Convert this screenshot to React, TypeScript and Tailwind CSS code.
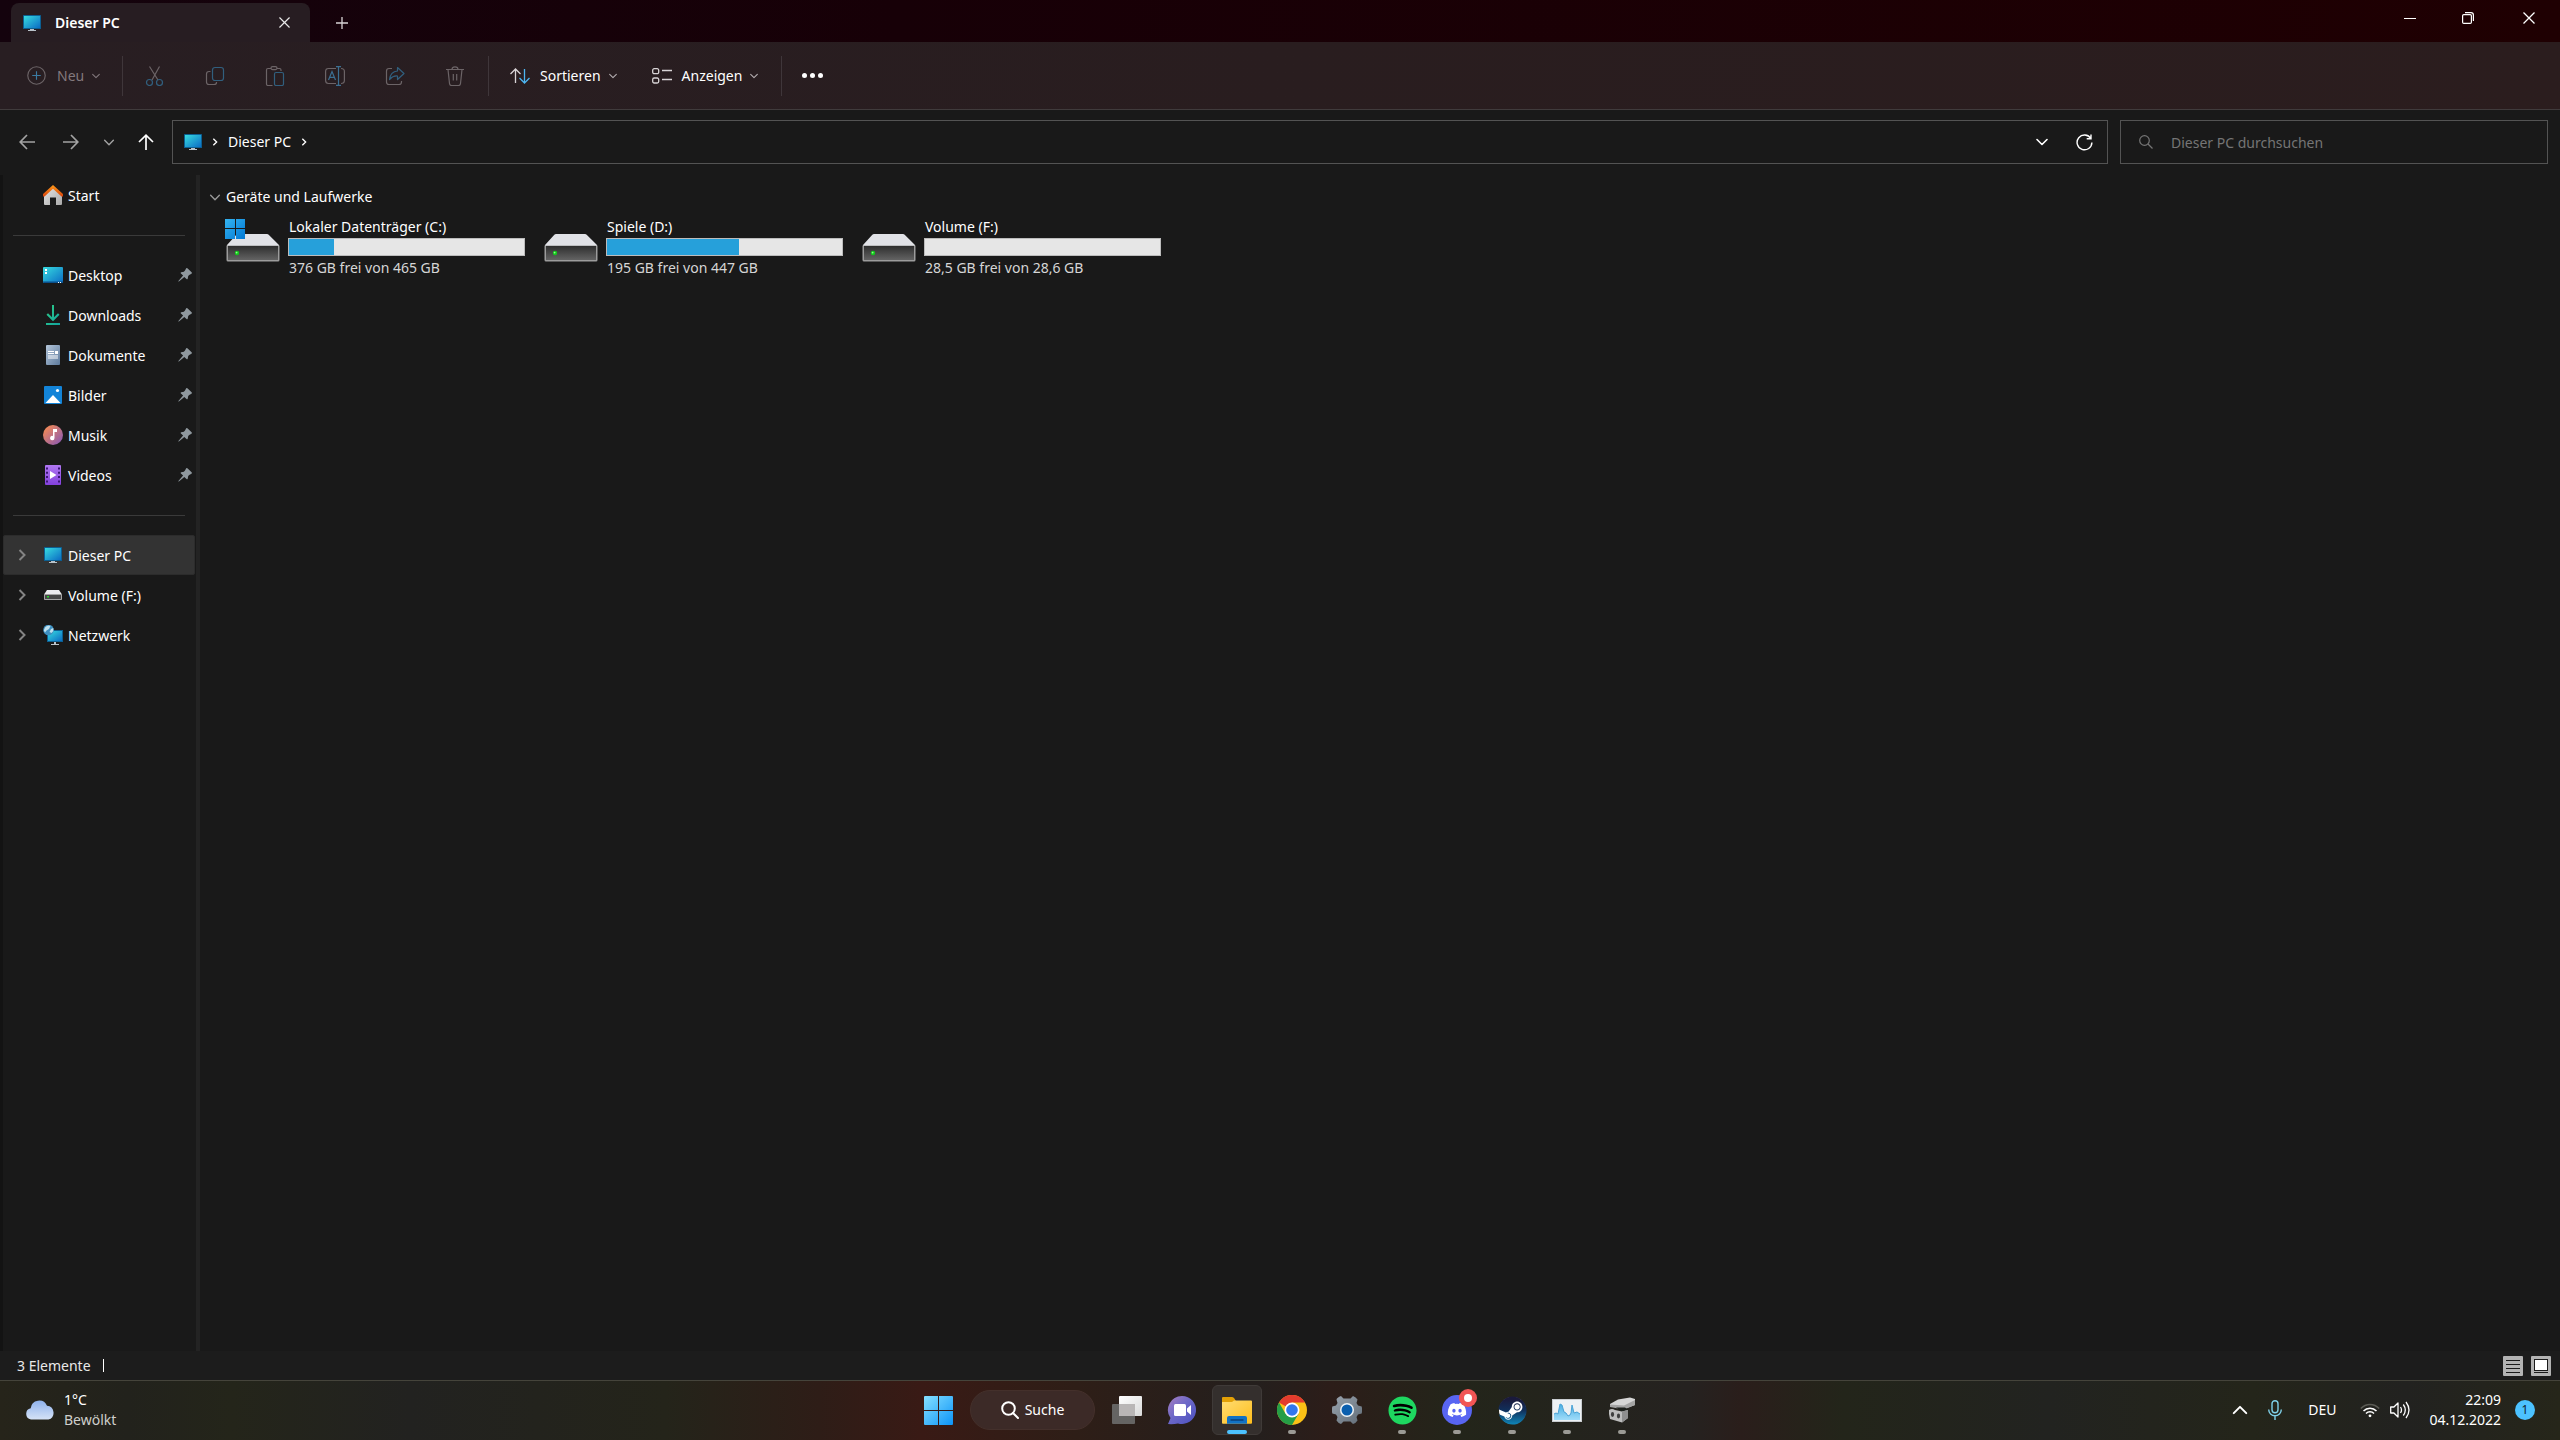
import type { ReactNode } from "react";
import { FaDiscord, FaSpotify, FaSteam } from "react-icons/fa";

type IconProps = { className?: string };

type Place = { label: string; icon: ReactNode };

type Drive = { name: string; free: string; used: number; system?: boolean };

/* ---------- icons ---------- */

function ChevronDown({ className = "" }: IconProps) {
  return (
    <svg viewBox="0 0 12 8" fill="none" stroke="currentColor" strokeLinecap="round" strokeLinejoin="round" className={className}>
      <path d="M1 1.5 6 6.5 11 1.5" strokeWidth="1.6" />
    </svg>
  );
}

function ChevronRight({ className = "" }: IconProps) {
  return (
    <svg viewBox="0 0 8 12" fill="none" stroke="currentColor" className={className}>
      <path d="M1.5 1 6.5 6 1.5 11" strokeWidth="2" />
    </svg>
  );
}

function CloseIcon({ className = "" }: IconProps) {
  return (
    <svg viewBox="0 0 12 12" fill="none" stroke="currentColor" strokeWidth="1.3" className={className}>
      <path d="M.5.5l11 11M11.5.5l-11 11" />
    </svg>
  );
}

function MonitorIcon({ className = "" }: IconProps) {
  return (
    <svg viewBox="0 0 18 16" className={className}>
      <defs>
        <linearGradient id="screen" x1="0" y1="0" x2="1" y2="1">
          <stop offset="0" stopColor="#37dbe0" />
          <stop offset="1" stopColor="#0b6cc4" />
        </linearGradient>
      </defs>
      <rect width="18" height="14" rx=".6" fill="#0c5f92" />
      <rect x="1" y="1" width="16" height="12" fill="url(#screen)" />
      <path d="M7 14h4v1h2v1H5v-1h2z" fill="#b9c2c9" />
    </svg>
  );
}

function HomeIcon() {
  return (
    <svg viewBox="0 0 20 20" className="size-5">
      <defs>
        <linearGradient id="wall" x1="0" y1="0" x2="1" y2="1">
          <stop offset="0" stopColor="#e6e6e6" />
          <stop offset="1" stopColor="#a9a9a9" />
        </linearGradient>
        <linearGradient id="roof" x1="0" y1="0" x2="0" y2="1">
          <stop offset="0" stopColor="#ff9a1a" />
          <stop offset="1" stopColor="#d8430b" />
        </linearGradient>
      </defs>
      <path d="M1 9.5 10 2l9 7.5V19q0 1-1 1h-5v-7.5H7V20H2q-1 0-1-1z" fill="url(#wall)" />
      <path d="M10 0 20 9v2.5h-1.5L10 3.8 1.5 11.5H0V9z" fill="url(#roof)" />
    </svg>
  );
}

function DesktopIcon() {
  return (
    <svg viewBox="0 0 20 16" className="h-4 w-5">
      <rect width="20" height="16" rx="1" fill="url(#screen)" />
      <path d="M0 14.5h20V15q0 1-1 1H1q-1 0-1-1z" fill="#0a4f8a" />
      <path d="M2 2h2v2H2zM2 5h2v2H2zM15 15h1v1h-1zM17 15h1v1h-1z" fill="#fff" />
    </svg>
  );
}

function DownloadIcon() {
  return (
    <svg viewBox="0 0 14 20" className="h-5 w-[14px]">
      <defs>
        <linearGradient id="down" x1="0" y1="0" x2="1" y2="1">
          <stop offset="0" stopColor="#2fce85" />
          <stop offset="1" stopColor="#12a3a0" />
        </linearGradient>
      </defs>
      <path d="M6 0h2v12.200l4-4 1.500 1.500L7 16.200.5 9.700 2 8.200l4 4zM0 18h14v2H0z" fill="url(#down)" />
    </svg>
  );
}

function DocumentIcon() {
  return (
    <svg viewBox="0 0 14 20" className="h-5 w-[14px]">
      <defs>
        <linearGradient id="doc" x1="0" y1="0" x2="1" y2="1">
          <stop offset="0" stopColor="#b4c6da" />
          <stop offset="1" stopColor="#5d7a9c" />
        </linearGradient>
      </defs>
      <rect width="14" height="20" rx="1" fill="url(#doc)" />
      <path d="M2 6h6v1H2zM2 8h6v1H2zM9 6h3v3H9zM2 10.5h10v1H2zM2 12.5h10v1H2z" fill="#fff" />
    </svg>
  );
}

function PictureIcon() {
  return (
    <svg viewBox="0 0 18 18" className="size-[18px]">
      <rect width="18" height="18" rx="1" fill="#1384d8" />
      <path d="M1.500 17 9 9l7.500 8z" fill="#fff" />
      <circle cx="13.5" cy="4.5" r="1.6" fill="#fff" />
    </svg>
  );
}

function MusicIcon() {
  return (
    <svg viewBox="0 0 20 20" className="size-5">
      <defs>
        <linearGradient id="music" x1="0" y1="0" x2="1" y2="1">
          <stop offset="0.1" stopColor="#f48a54" />
          <stop offset="0.9" stopColor="#8e5bb0" />
        </linearGradient>
      </defs>
      <circle cx="10" cy="10" r="10" fill="url(#music)" />
      <path d="M10 4h4v3h-2.5v6a2.200 2.200 0 1 1-1.500-2.100z" fill="#fff" />
    </svg>
  );
}

function VideoIcon() {
  return (
    <svg viewBox="0 0 16 20" className="h-5 w-4">
      <defs>
        <linearGradient id="video" x1="0" y1="0" x2="0" y2="1">
          <stop offset="0" stopColor="#b178f2" />
          <stop offset="1" stopColor="#8340dc" />
        </linearGradient>
      </defs>
      <rect width="16" height="20" rx="1" fill="url(#video)" />
      <path d="M5 6v8l6.500-4z" fill="#fff" />
      <path d="M2 2.500v16M14 2.500v16" stroke="#3b1774" strokeWidth="2" strokeDasharray="2 2.3" />
    </svg>
  );
}

function PinIcon() {
  return (
    <svg viewBox="0 0 14 14" className="size-[14px] text-[#8f989e]">
      <path
        d="M8.200.3q.8-.5 1.500.1l3.900 3.900q.6.800-.1 1.400l-2.300 1.200-1 1.100-.5 2.700q-.4.900-1.200.3L6.300 8.900.9 13.500H.4v-.5L5.100 7.600 2.900 5.500q-.6-.8.300-1.200l2.700-.5 1.100-1.200z"
        fill="currentColor"
      />
    </svg>
  );
}

function SmallDriveIcon() {
  return (
    <svg viewBox="0 0 18 10" className="h-[10px] w-[18px]">
      <path d="M3 0h12l3 4.500H0z" fill="#ededf0" />
      <rect y="4" width="18" height="6" rx=".8" fill="#a5a5a5" />
      <rect x="1" y="5" width="16" height="4" fill="#484848" />
      <rect x="3" y="6" width="2" height="1.5" fill="#25d32c" />
    </svg>
  );
}

function NetworkIcon() {
  return (
    <svg viewBox="0 0 20 20" className="size-5">
      <rect x="4" y="5" width="16" height="12" fill="#0c5f92" />
      <rect x="5" y="6" width="14" height="10" fill="url(#screen)" />
      <path d="M11 17h2v2h3v1H8v-1h3z" fill="#b9c2c9" />
      <circle cx="5.5" cy="5" r="5.3" fill="#3d8fc0" />
      <path d="M2 2.500Q5-.5 7.500 1L6 4 3.500 5.500 2 7.500.8 5.500zM8 4l2.300-1v3L8.500 8 6.500 7z" fill="#bfe0ee" />
    </svg>
  );
}

function DriveIcon({ system }: { system?: boolean }) {
  return (
    <svg viewBox="0 0 56 44" className="h-11 w-14 shrink-0">
      <defs>
        <linearGradient id="drive" x1="0" y1="0" x2="0" y2="1">
          <stop offset="0" stopColor="#2e2e2e" />
          <stop offset="1" stopColor="#636363" />
        </linearGradient>
        <linearGradient id="win" x1="0" y1="0" x2="1" y2="1">
          <stop offset="0" stopColor="#35b4f0" />
          <stop offset="1" stopColor="#0078d4" />
        </linearGradient>
      </defs>
      <path d="M13 16h29q1 0 1.700.8L54 27v1H2v-1L11.300 16.800Q12 16 13 16z" fill="#e1e2e7" />
      <path d="M1.500 27.500h53V42q0 1.500-1.500 1.500H3q-1.500 0-1.500-1.500z" fill="#9c9c9c" />
      <rect x="3" y="28" width="50" height="14" fill="url(#drive)" />
      <circle cx="12" cy="35" r="2.2" fill="#14c81c" />
      <circle cx="11.6" cy="34.6" r=".9" fill="#8dff8a" />
      {system && <path d="M0 1h10v9H0zM11 1h9v9h-9zM0 11h10v10H0zM11 11h9v10h-9z" fill="url(#win)" />}
    </svg>
  );
}

function CutIcon() {
  return (
    <svg viewBox="0 0 20 20" fill="none" strokeWidth="1.2" className="size-5">
      <path d="M4.500.5 13 14M14.500.5 7 14" stroke="#6c6467" />
      <circle cx="4.5" cy="16.5" r="3" stroke="#315f7e" />
      <circle cx="14.5" cy="16.5" r="3" stroke="#315f7e" />
    </svg>
  );
}

function CopyIcon() {
  return (
    <svg viewBox="0 0 20 20" fill="none" strokeWidth="1.2" className="size-5">
      <path d="M5.500 5.500H4Q1.500 5.500 1.500 8v8q0 2.500 2.500 2.500h5q2.500 0 2.500-2v-.5" stroke="#6c6467" />
      <rect x="7.5" y="1.5" width="11" height="13" rx="2.5" stroke="#315f7e" />
    </svg>
  );
}

function PasteIcon() {
  return (
    <svg viewBox="0 0 20 20" fill="none" strokeWidth="1.2" className="size-5">
      <path d="M6 2.500H3Q1.500 2.500 1.500 4v14q0 1.500 1.500 1.500h4.500M12 2.500h2.500Q16 2.500 16 4v1" stroke="#6c6467" />
      <rect x="6" y=".6" width="6" height="3" rx="1.5" stroke="#6c6467" />
      <rect x="9.5" y="6.5" width="9" height="13" rx="1.5" stroke="#315f7e" />
    </svg>
  );
}

function RenameIcon() {
  return (
    <svg viewBox="0 0 20 20" fill="none" strokeWidth="1.2" className="size-5">
      <path d="M11 2.500H3.500Q.6 2.500.6 5.500v9q0 3 2.900 3H11M16 2.500q3.400 0 3.400 3v9q0 3-3.400 3" stroke="#6c6467" />
      <path d="M3.500 14 7 5.500 10.500 14M4.700 11.300h4.600M13.500.6v18.800M11 .6h5M11 19.400h5" stroke="#3b6f92" />
    </svg>
  );
}

function ShareIcon() {
  return (
    <svg viewBox="0 0 20 20" fill="none" strokeWidth="1.2" strokeLinejoin="round" className="size-5">
      <path d="M7 2.500H4Q1.500 2.500 1.500 5v11q0 2.500 2.500 2.500h10q2.500 0 2.500-2.500v-1" stroke="#6c6467" />
      <path d="M12.500 1.500 19 7.500l-6.500 6V10Q8 9.500 4.500 13.500 5.500 5.500 12.500 5z" stroke="#315f7e" />
    </svg>
  );
}

function TrashIcon() {
  return (
    <svg viewBox="0 0 20 20" fill="none" stroke="#6c6467" strokeWidth="1.2" className="size-5">
      <path d="M1 3.500h18M7 3.300Q7 .8 10 .8t3 2.500M3 3.500l1.500 14q.2 2 2 2h7q1.800 0 2-2L17 3.500M8.300 8v6.500M11.700 8v6.500" />
    </svg>
  );
}

function WindowsLogo() {
  return (
    <svg viewBox="0 0 29 29" className="size-[29px]">
      <defs>
        <linearGradient id="start" x1="0" y1="0" x2="1" y2="1">
          <stop offset="0" stopColor="#86e0ff" />
          <stop offset="1" stopColor="#0c94f8" />
        </linearGradient>
      </defs>
      <path d="M1 0h13v14H0V1q0-1 1-1zM15 0h13q1 0 1 1v13H15zM0 15h14v14H1q-1 0-1-1zM15 15h14v13q0 1-1 1H15z" fill="url(#start)" />
    </svg>
  );
}

function TaskViewIcon() {
  return (
    <svg viewBox="0 0 30 28" className="h-7 w-[30px]">
      <defs>
        <linearGradient id="tvBack" x1="0" y1="0" x2="1" y2="1">
          <stop offset="0" stopColor="#ffffff" />
          <stop offset="1" stopColor="#d9d9d9" />
        </linearGradient>
      </defs>
      <rect x="7" width="23" height="20" rx="1" fill="url(#tvBack)" />
      <rect y="8" width="23" height="20" rx="1" fill="#6b6b6b" fillOpacity=".9" />
      <rect x="7" y="8" width="16" height="12" fill="#b9b6b6" />
    </svg>
  );
}

function ChatIcon() {
  return (
    <svg viewBox="0 0 30 30" className="size-[30px]">
      <defs>
        <linearGradient id="chat" x1="0" y1="0" x2="1" y2="1">
          <stop offset="0" stopColor="#a77fc0" />
          <stop offset=".45" stopColor="#6d68c8" />
          <stop offset="1" stopColor="#4a50c0" />
        </linearGradient>
      </defs>
      <path d="M15 1a14 14 0 1 1-4 27.400Q6 29.500 1 29L3.500 23A14 14 0 0 1 15 1z" fill="url(#chat)" />
      <rect x="7" y="9" width="12" height="12" rx="1.5" fill="#fff" />
      <path d="M20 13.500 24 10v10l-4-3.500z" fill="#fff" />
    </svg>
  );
}

function FolderIcon() {
  return (
    <svg viewBox="0 0 30 27" className="h-[27px] w-[30px]">
      <defs>
        <linearGradient id="folder" x1="0" y1="0" x2="1" y2="1">
          <stop offset="0" stopColor="#ffdc72" />
          <stop offset="1" stopColor="#ffbe1c" />
        </linearGradient>
      </defs>
      <path d="M0 1q0-1 1-1h9q1 0 2 1l2 3v3H0z" fill="#e2a006" />
      <path d="M0 5h10l2-1.500h17q1 0 1 1V26q0 .8-1 .8H1q-1 0-1-.8z" fill="url(#folder)" />
      <path d="M5 26.800V21q0-2 2-2h16q2 0 2 2v5.800z" fill="#1272c4" />
      <path d="M9 23h12" stroke="#0a3f78" strokeWidth="1.4" strokeLinecap="round" />
    </svg>
  );
}

function ChromeIcon() {
  return (
    <svg viewBox="0 0 30 30" className="size-[30px]">
      <circle cx="15" cy="15" r="15" fill="#fbc116" />
      <path d="M2 7.500A15 15 0 0 1 28 7.500H15V15z" fill="#e33b2e" />
      <path d="M2 7.500 8.500 18.700 15 15 21.500 18.700 15 30A15 15 0 0 1 2 7.500z" fill="#259e46" />
      <circle cx="15" cy="15" r="7.5" fill="#fff" />
      <circle cx="15" cy="15" r="5.8" fill="#3277ec" />
    </svg>
  );
}

function SettingsIcon() {
  return (
    <svg viewBox="0 0 30 30" className="size-[30px]">
      <defs>
        <linearGradient id="gear" x1="0" y1="0" x2="1" y2="1">
          <stop offset="0" stopColor="#9aa4ae" />
          <stop offset="1" stopColor="#616c77" />
        </linearGradient>
      </defs>
      <path
        d="M11.500 3.500 9 1Q5 2.500 4.500 4.500L5.500 8 4 10.500.3 11.500Q-.5 15 .3 18.500L4 19.500 5.500 22 4.500 25.500Q6 28 9 29L11.500 26.500h7L21 29q3-1 4.500-3.500L24.500 22 26 19.500 29.700 18.500Q30.500 15 29.700 11.500L26 10.500 24.500 8l1-3.500Q24 2 21 1L18.500 3.500z"
        fill="url(#gear)"
      />
      <circle cx="15" cy="15" r="7" fill="#f0f4f7" />
      <circle cx="15" cy="15" r="5.5" fill="#0b5fae" />
    </svg>
  );
}

function SpotifyIcon() {
  return (
    <span className="flex size-[29px] items-center justify-center rounded-full bg-[radial-gradient(black_65%,transparent_66%)]">
      <FaSpotify className="size-[29px] text-[#1ed760]" />
    </span>
  );
}

function DiscordIcon() {
  return (
    <span className="relative flex size-[30px] items-center justify-center rounded-full bg-[#5865f2]">
      <FaDiscord className="size-5 text-white" />
      <span className="absolute -top-[6px] -right-[5px] flex size-[18px] items-center justify-center rounded-full bg-[#f15555]">
        <span className="size-2 rounded-full bg-white" />
      </span>
    </span>
  );
}

function SteamIcon() {
  return (
    <span className="relative block size-[29px]">
      <svg viewBox="0 0 29 29" className="absolute size-0">
        <defs>
          <linearGradient id="steam" x1="0" y1="0" x2="0" y2="1">
            <stop offset="0.1" stopColor="#1a1a3c" />
            <stop offset="0.5" stopColor="#10305c" />
            <stop offset="1" stopColor="#0f86b8" />
          </linearGradient>
        </defs>
      </svg>
      <span className="absolute inset-px rounded-full bg-white" />
      <FaSteam fill="url(#steam)" className="relative size-[29px]" />
    </span>
  );
}

function TaskManagerIcon() {
  return (
    <svg viewBox="0 0 30 23" className="h-[23px] w-[30px]">
      <defs>
        <linearGradient id="graph" x1="0" y1="0" x2="0" y2="1">
          <stop offset="0" stopColor="#49aee2" />
          <stop offset="1" stopColor="#9fdcfa" />
        </linearGradient>
      </defs>
      <rect width="30" height="23" fill="#c9cdd1" />
      <rect x="1" y="1" width="28" height="21" fill="#edf1f4" />
      <path d="M2 15l2-1 2 1 2-10 2 1 2 7 2 1 2 3 2-1 1-2 1-8 2 8 3-1 3 2v6H2z" fill="url(#graph)" />
      <path d="M2 15l2-1 2 1 2-10 2 1 2 7 2 1 2 3 2-1 1-2 1-8 2 8 3-1 3 2" fill="none" stroke="#4aa3d6" />
    </svg>
  );
}

function ControllerToolIcon() {
  return (
    <svg viewBox="0 0 28 26" className="h-[26px] w-7">
      <path d="M10 2.500 22 .5 27 2v6l-11 4L2 9V7z" fill="#d6d6d6" />
      <path d="M2 7.500 16 8.500 27 3v5l-11 4.500L2 10z" fill="#a4a4a4" />
      <path d="M8 10.500h9l3 2-6 2z" fill="#1d211d" />
      <path d="M1 13q3-2 6 0l7 1.500 6-1.500v8l-6 4.500L2 22q-1.500-5-1-9z" fill="#bdbdbd" />
      <path d="m14 14.500 6-1.500v8l-6 4.500z" fill="#8e8e8e" />
      <ellipse cx="4.5" cy="17.5" rx="1.6" ry="2.4" fill="#3f3f3f" />
      <ellipse cx="10.5" cy="19" rx="1.6" ry="2.4" fill="#3f3f3f" />
    </svg>
  );
}

/* ---------- data ---------- */

const pinned: Place[] = [
  { label: "Desktop", icon: <DesktopIcon /> },
  { label: "Downloads", icon: <DownloadIcon /> },
  { label: "Dokumente", icon: <DocumentIcon /> },
  { label: "Bilder", icon: <PictureIcon /> },
  { label: "Musik", icon: <MusicIcon /> },
  { label: "Videos", icon: <VideoIcon /> },
];

const locations: Place[] = [
  { label: "Dieser PC", icon: <MonitorIcon className="h-4 w-[18px]" /> },
  { label: "Volume (F:)", icon: <SmallDriveIcon /> },
  { label: "Netzwerk", icon: <NetworkIcon /> },
];

const drives: Drive[] = [
  { name: "Lokaler Datenträger (C:)", free: "376 GB frei von 465 GB", used: 19, system: true },
  { name: "Spiele (D:)", free: "195 GB frei von 447 GB", used: 56 },
  { name: "Volume (F:)", free: "28,5 GB frei von 28,6 GB", used: 0 },
];

const fileActions = [
  { label: "Ausschneiden", icon: <CutIcon /> },
  { label: "Kopieren", icon: <CopyIcon /> },
  { label: "Einfügen", icon: <PasteIcon /> },
  { label: "Umbenennen", icon: <RenameIcon /> },
  { label: "Freigeben", icon: <ShareIcon /> },
  { label: "Löschen", icon: <TrashIcon /> },
];

const taskbarApps = [
  { label: "Chrome", icon: <ChromeIcon />, running: true },
  { label: "Einstellungen", icon: <SettingsIcon />, running: false },
  { label: "Spotify", icon: <SpotifyIcon />, running: true },
  { label: "Discord", icon: <DiscordIcon />, running: true },
  { label: "Steam", icon: <SteamIcon />, running: true },
  { label: "Task-Manager", icon: <TaskManagerIcon />, running: true },
  { label: "Geräte", icon: <ControllerToolIcon />, running: true },
];

/* ---------- layout ---------- */

function TitleBar() {
  return (
    <header className="flex h-[42px] items-stretch bg-linear-to-r from-[#14030d] via-[#170007] via-35% to-[#1f0002] pl-[11px]">
      <div className="mt-[3px] flex w-[299px] items-center rounded-t-lg bg-[#271d22] px-3">
        <MonitorIcon className="h-4 w-[18px]" />
        <span className="ml-[14px] flex-1 font-semibold text-white">Dieser PC</span>
        <button type="button" aria-label="Tab schließen" className="flex size-7 items-center justify-center">
          <CloseIcon className="size-[11px]" />
        </button>
      </div>
      <button type="button" aria-label="Neuer Tab" className="mt-1 flex w-16 items-center justify-center">
        <svg viewBox="0 0 12 12" className="size-3" stroke="#d8d4d6" strokeWidth="1.3">
          <path d="M6 0v12M0 6h12" />
        </svg>
      </button>
      <div className="ml-auto flex h-9 text-white">
        <button type="button" aria-label="Minimieren" className="flex w-[58px] items-center justify-center">
          <span className="h-px w-3 bg-white" />
        </button>
        <button type="button" aria-label="Verkleinern" className="flex w-[58px] items-center justify-center">
          <svg viewBox="0 0 12 12" className="size-3" fill="none" stroke="currentColor" strokeWidth="1.2">
            <rect x=".6" y="2.6" width="8.8" height="8.8" rx="1.2" />
            <path d="M3 .6h6q2.400 0 2.400 2.400v6" />
          </svg>
        </button>
        <button type="button" aria-label="Schließen" className="flex w-[63px] items-center justify-center">
          <CloseIcon className="size-3" />
        </button>
      </div>
    </header>
  );
}

function Divider() {
  return <span className="h-10 w-px bg-[#3f363a]" />;
}

function CommandBar() {
  return (
    <div className="flex h-[68px] items-center border-b border-[#403b3c] bg-linear-to-r from-[#281e22] via-[#291d1f] to-[#2b1d1e]">
      <button type="button" disabled className="flex w-[122px] items-center pl-[27px] text-[#83797d]">
        <svg viewBox="0 0 20 20" className="size-[19px]" fill="none" strokeWidth="1.2">
          <circle cx="10" cy="10" r="9.2" stroke="#6c6467" />
          <path d="M10 5.500v9M5.500 10h9" stroke="#3b7ba3" />
        </svg>
        <span className="ml-[11px] pt-px">Neu</span>
        <ChevronDown className="ml-2 h-[6px] w-2" />
      </button>
      <Divider />
      <div className="flex gap-2 pr-[7px] pl-[6px]">
        {fileActions.map((action) => (
          <button key={action.label} type="button" disabled aria-label={action.label} className="flex h-10 w-[52px] items-center justify-center">
            {action.icon}
          </button>
        ))}
      </div>
      <Divider />
      <button type="button" className="ml-[21px] flex items-center text-white">
        <svg viewBox="0 0 20 16" className="h-4 w-5" fill="none" strokeWidth="1.3">
          <path d="M5.500 15V1M.5 6l5-5 5 5" stroke="#d8d4d6" />
          <path d="M14.500 1v14M9.500 10l5 5 5-5" stroke="#4db5f0" />
        </svg>
        <span className="ml-[10px] pt-px">Sortieren</span>
        <ChevronDown className="ml-2 h-[6px] w-2 text-[#b5afb1]" />
      </button>
      <button type="button" className="mr-[23px] ml-[35px] flex items-center text-white">
        <svg viewBox="0 0 20 16" className="h-4 w-5" fill="none" stroke="#d8d4d6" strokeWidth="1.3">
          <rect x=".7" y=".7" width="6" height="5" rx="1.5" />
          <rect x=".7" y="10" width="6" height="5" rx="1.5" />
          <path d="M10 2.500h10M10 11.500h10" />
        </svg>
        <span className="ml-[10px] pt-px">Anzeigen</span>
        <ChevronDown className="ml-2 h-[6px] w-2 text-[#b5afb1]" />
      </button>
      <Divider />
      <button type="button" aria-label="Weitere Optionen" className="ml-5 flex gap-[3px]">
        <span className="size-[5px] rounded-full bg-white" />
        <span className="size-[5px] rounded-full bg-white" />
        <span className="size-[5px] rounded-full bg-white" />
      </button>
    </div>
  );
}

function AddressRow() {
  return (
    <div className="flex items-center pt-[10px] pr-3 pb-[11px]">
      <div className="flex w-[172px] items-center pl-[19px] text-[#a3a3a3]">
        <button type="button" aria-label="Zurück">
          <svg viewBox="0 0 16 16" className="size-4" fill="none" stroke="currentColor" strokeWidth="1.7">
            <path d="M16 8H1.500M8 1 1.200 8 8 15" />
          </svg>
        </button>
        <button type="button" aria-label="Vorwärts" className="ml-7">
          <svg viewBox="0 0 16 16" className="size-4" fill="none" stroke="currentColor" strokeWidth="1.7">
            <path d="M0 8h14.500M8 1l6.800 7L8 15" />
          </svg>
        </button>
        <button type="button" aria-label="Zuletzt besucht" className="ml-6">
          <ChevronDown className="h-[7px] w-3" />
        </button>
        <button type="button" aria-label="Nach oben" className="ml-[23px] text-white">
          <svg viewBox="0 0 16 16" className="size-4" fill="none" stroke="currentColor" strokeWidth="1.7">
            <path d="M8 16V1.500M1 8l7-6.800L15 8" />
          </svg>
        </button>
      </div>
      <div className="flex h-11 flex-1 items-center border border-[#535353] pr-[14px] pl-[11px] text-white">
        <MonitorIcon className="h-4 w-[18px]" />
        <ChevronRight className="ml-[10px] h-2 w-[6px]" />
        <button type="button" className="ml-[10px]">Dieser PC</button>
        <ChevronRight className="ml-[10px] h-2 w-[6px]" />
        <button type="button" aria-label="Verlauf" className="ml-auto">
          <ChevronDown className="h-2 w-3" />
        </button>
        <button type="button" aria-label="Aktualisieren" className="ml-7">
          <svg viewBox="0 0 17 17" className="size-[17px]" fill="none" stroke="currentColor" strokeWidth="1.4">
            <path d="M14.800 4.500A7.400 7.400 0 1 0 15.900 8.500M15 .5v4.300h-4.300" />
          </svg>
        </button>
      </div>
      <label className="ml-3 flex h-11 w-[17%] max-w-[428px] items-center border border-[#535353] pl-[18px]">
        <svg viewBox="0 0 14 14" className="size-[14px]" fill="none" stroke="#757575" strokeWidth="1.2">
          <circle cx="5.5" cy="5.5" r="4.8" />
          <path d="m9 9 4.500 4.500" />
        </svg>
        <input
          type="search"
          aria-label="Dieser PC durchsuchen"
          placeholder="Dieser PC durchsuchen"
          className="ml-[18px] min-w-0 flex-1 bg-transparent pt-px outline-none placeholder:text-[#757575]"
        />
      </label>
    </div>
  );
}

function SidebarLine() {
  return (
    <div className="flex h-10 items-center pr-[11px] pl-[10px]">
      <hr className="w-full border-[#3a3a3a]" />
    </div>
  );
}

function Sidebar() {
  return (
    <nav className="w-[200px] shrink-0 border-r-4 border-l-3 border-r-[#232323] border-l-[#131313] text-white">
      <button type="button" className="flex h-10 w-full items-center pl-10">
        <HomeIcon />
        <span className="ml-[5px] pt-px">Start</span>
      </button>
      <SidebarLine />
      <ul>
        {pinned.map((place) => (
          <li key={place.label}>
            <button type="button" className="flex h-10 w-full items-center pr-1 pl-10">
              <span className="flex w-5 justify-center">{place.icon}</span>
              <span className="ml-[5px] flex-1 pt-px text-left">{place.label}</span>
              <PinIcon />
            </button>
          </li>
        ))}
      </ul>
      <SidebarLine />
      <ul>
        {locations.map((place, i) => (
          <li key={place.label}>
            <button
              type="button"
              className={`flex h-10 w-[192px] items-center pl-[14px] ${i === 0 ? "rounded-xs border border-[#2c2c2c] bg-[#333333]" : "border border-transparent"}`}
            >
              <ChevronRight className="h-3 w-2 text-[#848484]" />
              <span className="ml-[17px] flex w-5 justify-center">{place.icon}</span>
              <span className="ml-[5px] pt-px">{place.label}</span>
            </button>
          </li>
        ))}
      </ul>
    </nav>
  );
}

function DriveItem({ drive }: { drive: Drive }) {
  return (
    <li className="flex w-[318px] items-start">
      <DriveIcon system={drive.system} />
      <div className="ml-[7px] w-[237px]">
        <p className="pb-[2px] pl-px leading-[18px] text-white">{drive.name}</p>
        <div className="h-[18px] border border-[#bcbcbc] bg-[#e6e6e6]">
          <div className="h-full bg-[#26a0da]" style={{ width: `${drive.used}%` }} />
        </div>
        <p className="pl-px leading-6 text-[#d6d6d6]">{drive.free}</p>
      </div>
    </li>
  );
}

function StatusBar() {
  return (
    <footer className="flex h-[29px] items-center bg-[#1c1c1c] pr-[9px] pl-[17px] text-[#e8e8e8]">
      <span>3 Elemente</span>
      <span className="ml-3 h-[13px] w-px bg-white" />
      <div className="ml-auto flex gap-2">
        <button type="button" aria-label="Details">
          <svg viewBox="0 0 20 20" className="size-5">
            <rect width="20" height="20" rx="1" fill="#b3b3b3" />
            <path d="M3 4.500h14M3 8.500h14M3 12.500h14M3 16.500h14" stroke="#1a1a1a" />
          </svg>
        </button>
        <button type="button" aria-label="Große Miniaturansichten">
          <svg viewBox="0 0 20 20" className="size-5">
            <rect width="20" height="20" rx="1" fill="#b3b3b3" />
            <rect x="3.5" y="3.5" width="13" height="11" fill="#fff" stroke="#1a1a1a" />
            <path d="M3 16.500h14" stroke="#1a1a1a" />
          </svg>
        </button>
      </div>
    </footer>
  );
}

function Taskbar() {
  return (
    <div className="grid h-[60px] grid-cols-[1fr_auto_1fr] items-center border-t border-[#45443b] bg-[linear-gradient(to_right,#26241a_0%,#22221c_5%,#24251a_9%,#222220_16%,#24241a_26%,#2e1d17_32%,#391a15_36%,#2e1e17_42%,#241f1d_49%,#2c1d19_52%,#23251a_57%,#252220_66%,#2a1e1b_68%,#23251a_72%,#222320_80%,#24251a_88%,#222220_94%,#26261a_100%)] pb-px text-white">
      <button type="button" className="flex items-center gap-[9px] justify-self-start pl-[25px] text-left">
        <svg viewBox="0 0 30 20" className="h-5 w-[30px]">
          <defs>
            <linearGradient id="cloud" x1="0" y1="0" x2="0" y2="1">
              <stop offset="0" stopColor="#8fb2ec" />
              <stop offset="1" stopColor="#d5e2f6" />
            </linearGradient>
          </defs>
          <path d="M6 19.500a5.700 5.700 0 0 1-.3-11.200A8.500 8.500 0 0 1 22 5.800 7 7 0 0 1 23.500 19.500z" fill="url(#cloud)" />
        </svg>
        <span className="pb-px leading-5">
          1°C
          <br />
          <span className="text-[#cfcfcc]">Bewölkt</span>
        </span>
      </button>

      <div className="flex items-center gap-[5px]">
        <button type="button" aria-label="Start" className="flex size-[50px] items-center justify-center">
          <WindowsLogo />
        </button>
        <button type="button" className="mx-[2px] flex h-10 w-[125px] items-center justify-center gap-[6px] rounded-full border border-[#44302b] bg-[#3c2a27]">
          <svg viewBox="0 0 18 18" className="size-[18px]" fill="none" stroke="currentColor" strokeWidth="2">
            <circle cx="7.5" cy="7.5" r="6.3" />
            <path d="m12 12 5 5" strokeLinecap="round" />
          </svg>
          Suche
        </button>
        <button type="button" aria-label="Taskansicht" className="flex size-[50px] items-center justify-center">
          <TaskViewIcon />
        </button>
        <button type="button" aria-label="Chat" className="flex size-[50px] items-center justify-center">
          <ChatIcon />
        </button>
        <button type="button" aria-label="Explorer" className="relative flex size-[50px] items-center justify-center rounded-md border border-[#3f3a38] bg-[#342f2d]">
          <FolderIcon />
          <span className="absolute bottom-0 h-1 w-5 rounded-full bg-[#4cc2ff]" />
        </button>
        {taskbarApps.map((app) => (
          <button key={app.label} type="button" aria-label={app.label} className="relative flex size-[50px] items-center justify-center">
            {app.icon}
            {app.running && <span className="absolute bottom-px h-1 w-2 rounded-full bg-[#9b9a95]" />}
          </button>
        ))}
      </div>

      <div className="flex items-center justify-self-end pr-[25px]">
        <button type="button" aria-label="Ausgeblendete Symbole">
          <ChevronDown className="h-[10px] w-4 rotate-180" />
        </button>
        <button type="button" aria-label="Mikrofon" className="ml-5">
          <svg viewBox="0 0 14 20" className="h-5 w-[14px]" fill="none" stroke="#7fd0e8" strokeWidth="1.4">
            <rect x="4" y=".7" width="6" height="12" rx="3" />
            <path d="M.7 9.500a6.300 6.300 0 0 0 12.600 0M7 16v4" />
          </svg>
        </button>
        <button type="button" className="ml-[26px]">DEU</button>
        <button type="button" aria-label="Netzwerk und Lautstärke" className="ml-6 flex items-center gap-[10px]">
          <svg viewBox="0 0 20 16" className="h-4 w-5" fill="none" stroke="#fff" strokeWidth="1.5">
            <path d="M.8 6.500a12.500 12.500 0 0 1 18.400 0" stroke="#5b5b55" />
            <path d="M3.500 9a9 9 0 0 1 13 0M6 11.500a5.600 5.600 0 0 1 8 0" />
            <circle cx="10" cy="13.8" r="1.4" fill="#fff" stroke="none" />
          </svg>
          <svg viewBox="0 0 20 18" className="h-[18px] w-5" fill="none" stroke="#fff" strokeWidth="1.3" strokeLinejoin="round">
            <path d="M.7 6h3.200L8 2v14l-4.100-4H.7zM10.500 6q2 3 0 6M13.300 3.500q4 5.500 0 11M16 1q6 8 0 16" />
          </svg>
        </button>
        <button type="button" className="ml-[19px] pb-px text-right leading-5">
          22:09
          <br />
          04.12.2022
        </button>
        <button type="button" aria-label="Benachrichtigungen" className="ml-[14px] flex size-5 items-center justify-center rounded-full bg-[#4cc2ff] text-xs text-[#10222c]">
          1
        </button>
      </div>
    </div>
  );
}

export default function App() {
  return (
    <div className="flex min-h-screen flex-col bg-[#191919] font-['Noto_Sans','Open_Sans',sans-serif] text-[14px] leading-5 text-[#e8e8e8]">
      <TitleBar />
      <CommandBar />
      <AddressRow />
      <div className="flex flex-1">
        <Sidebar />
        <main className="flex-1 pt-3 pl-[9px]">
          <button type="button" className="flex items-center text-white">
            <ChevronDown className="h-[7px] w-3 text-[#9a9a9a]" />
            <h2 className="ml-[5px]">Geräte und Laufwerke</h2>
          </button>
          <ul className="mt-[11px] flex flex-wrap pl-4">
            {drives.map((drive) => (
              <DriveItem key={drive.name} drive={drive} />
            ))}
          </ul>
        </main>
      </div>
      <StatusBar />
      <Taskbar />
    </div>
  );
}
